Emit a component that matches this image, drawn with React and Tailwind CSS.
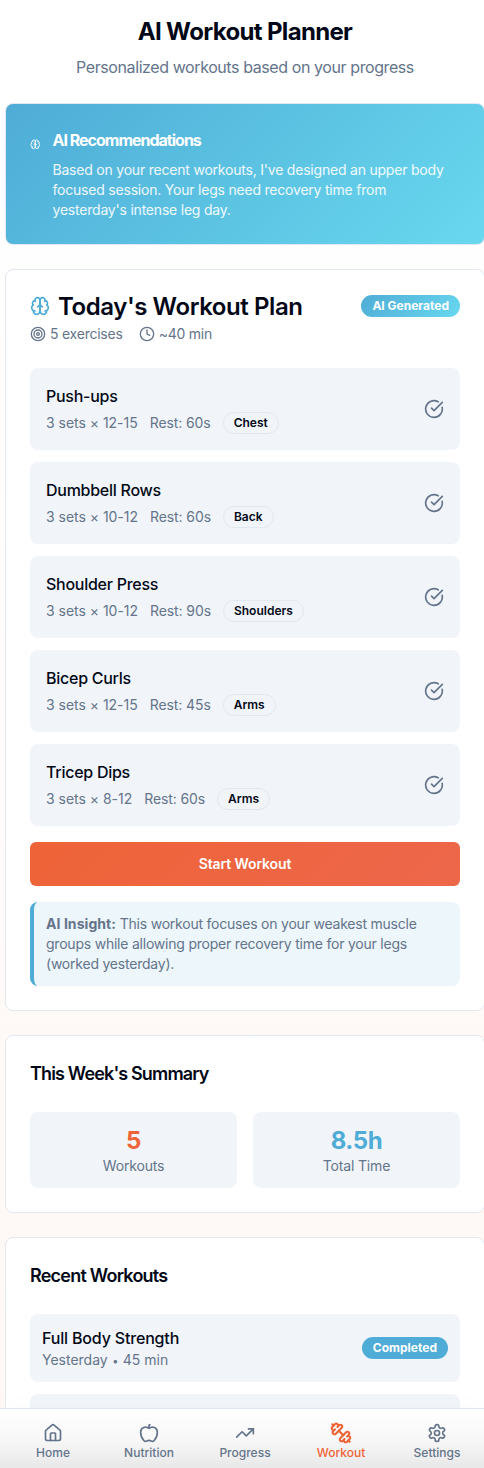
import { CircleCheckBig, Target, Clock, TrendingUp, Apple } from "lucide-react";

const INK = "text-[#020817]";
const MUTED = "text-[#64748b]";

const exercises = [
  { name: "Push-ups", sets: "3 sets × 12-15", rest: "Rest: 60s", group: "Chest" },
  { name: "Dumbbell Rows", sets: "3 sets × 10-12", rest: "Rest: 60s", group: "Back" },
  { name: "Shoulder Press", sets: "3 sets × 10-12", rest: "Rest: 90s", group: "Shoulders" },
  { name: "Bicep Curls", sets: "3 sets × 12-15", rest: "Rest: 45s", group: "Arms" },
  { name: "Tricep Dips", sets: "3 sets × 8-12", rest: "Rest: 60s", group: "Arms" },
];

function Icon({ paths, className, strokeWidth = 2 }) {
  return (
    <svg viewBox="0 0 24 24" fill="none" stroke="currentColor" strokeWidth={strokeWidth} strokeLinecap="round" strokeLinejoin="round" className={className}>
      {paths.map((d) => <path key={d} d={d} />)}
    </svg>
  );
}

const brainPaths = [
  "M12 5a3 3 0 1 0-5.997.125 4 4 0 0 0-2.526 5.77 4 4 0 0 0 .556 6.588A4 4 0 1 0 12 18Z",
  "M12 5a3 3 0 1 1 5.997.125 4 4 0 0 1 2.526 5.77 4 4 0 0 1-.556 6.588A4 4 0 1 1 12 18Z",
  "M15 13a4.5 4.5 0 0 1-3-4 4.5 4.5 0 0 1-3 4",
  "M17.599 6.5a3 3 0 0 0 .399-1.375",
  "M6.003 5.125A3 3 0 0 0 6.401 6.5",
  "M3.477 10.896a4 4 0 0 1 .585-.396",
  "M19.938 10.5a4 4 0 0 1 .585.396",
  "M6 18a4 4 0 0 1-1.967-.516",
  "M19.967 17.484A4 4 0 0 1 18 18",
];

const homePaths = [
  "M15 21v-8a1 1 0 0 0-1-1h-4a1 1 0 0 0-1 1v8",
  "M3 10a2 2 0 0 1 .709-1.528l7-5.999a2 2 0 0 1 2.582 0l7 5.999A2 2 0 0 1 21 10v9a2 2 0 0 1-2 2H5a2 2 0 0 1-2-2z",
];

const dumbbellPaths = [
  "M14.4 14.4 9.6 9.6",
  "M18.657 21.485a2 2 0 1 1-2.829-2.828l-1.767 1.768a2 2 0 1 1-2.829-2.829l6.364-6.364a2 2 0 1 1 2.829 2.829l-1.768 1.767a2 2 0 1 1 2.828 2.829z",
  "m21.5 21.5-1.4-1.4",
  "M3.9 3.9 2.5 2.5",
  "M6.404 12.768a2 2 0 1 1-2.829-2.829l1.768-1.767a2 2 0 1 1-2.828-2.829l2.828-2.828a2 2 0 1 1 2.829 2.828l1.767-1.768a2 2 0 1 1 2.829 2.829z",
];

const settingsPaths = [
  "M12.22 2h-.44a2 2 0 0 0-2 2v.18a2 2 0 0 1-1 1.73l-.43.25a2 2 0 0 1-2 0l-.15-.08a2 2 0 0 0-2.73.73l-.22.38a2 2 0 0 0 .73 2.73l.15.1a2 2 0 0 1 1 1.72v.51a2 2 0 0 1-1 1.74l-.15.09a2 2 0 0 0-.73 2.73l.22.38a2 2 0 0 0 2.73.73l.15-.08a2 2 0 0 1 2 0l.43.25a2 2 0 0 1 1 1.73V20a2 2 0 0 0 2 2h.44a2 2 0 0 0 2-2v-.18a2 2 0 0 1 1-1.73l.43-.25a2 2 0 0 1 2 0l.15.08a2 2 0 0 0 2.73-.73l.22-.39a2 2 0 0 0-.73-2.73l-.15-.08a2 2 0 0 1-1-1.74v-.5a2 2 0 0 1 1-1.74l.15-.09a2 2 0 0 0 .73-2.73l-.22-.38a2 2 0 0 0-2.73-.73l-.15.08a2 2 0 0 1-2 0l-.43-.25a2 2 0 0 1-1-1.73V4a2 2 0 0 0-2-2z",
  "M15 12a3 3 0 1 1-6 0 3 3 0 0 1 6 0z",
];

function Card({ className = "", children }) {
  return <section className={`w-[480px] shrink-0 rounded-lg border border-[#e2e8f0] p-6 ${className}`}>{children}</section>;
}

function Stat({ value, label, color }) {
  return (
    <div className="rounded-lg bg-[#f1f5f9] px-3 pt-[13px] pb-3 text-center">
      <div className={`text-2xl leading-[31px] font-bold tracking-[-0.4px] ${color}`}>{value}</div>
      <div className={`text-sm tracking-[-0.17px] ${MUTED}`}>{label}</div>
    </div>
  );
}

function NavItem({ icon, label, active }) {
  return (
    <a className={`flex w-24 shrink-0 flex-col items-center gap-0.5 text-xs font-medium ${active ? "text-[#ee6337]" : MUTED}`}>
      {icon}
      <span>{label}</span>
    </a>
  );
}

export default function App() {
  return (
    <div className={`relative h-[1468px] w-full overflow-hidden bg-linear-to-b from-white from-10% via-[#fef9f7] via-75% to-[#fef7f5] font-['Inter',sans-serif] ${INK}`}>
      <main className="flex w-[490px] flex-col items-center gap-6 pt-4">
        <header className="text-center">
          <h1 className="text-2xl leading-8 font-bold tracking-[-0.66px]">AI Workout Planner</h1>
          <p className={`mt-[7px] mb-px text-base leading-6 tracking-[-0.41px] ${MUTED}`}>Personalized workouts based on your progress</p>
        </header>

        <Card className="-mt-px bg-linear-[135deg,#4facd6,#68d8ef] text-white">
          <div className="flex gap-3">
            <Icon paths={brainPaths} className="mt-[11px] h-[10.5px] w-[10.5px] shrink-0" />
            <div>
              <h2 className="mb-2.5 pt-0.5 text-base leading-5 font-bold tracking-[-1px]">AI Recommendations</h2>
              <p className="text-sm leading-5 tracking-[-0.21px] text-white/90">
                Based on your recent workouts, I've designed an upper body focused session. Your legs need recovery time from yesterday's intense leg day.
              </p>
            </div>
          </div>
        </Card>

        <Card className="bg-white">
          <div className="flex h-6 items-center justify-between">
            <h2 className="flex items-center gap-2 text-2xl leading-6 font-semibold tracking-[-0.42px]">
              <Icon paths={brainPaths} className="h-5 w-5 text-[#4facd6]" />
              <span className="pt-px">Today's Workout Plan</span>
            </h2>
            <span className="rounded-full bg-linear-[135deg,#4facd6,#68d8ef] px-[11px] py-[3px] text-xs font-bold text-white">AI Generated</span>
          </div>
          <div className={`mt-1.5 flex h-5 gap-4 text-sm tracking-[-0.23px] ${MUTED}`}>
            <span className="flex items-center gap-1"><Target size={16} />5 exercises</span>
            <span className="flex items-center gap-1"><Clock size={16} />~40 min</span>
          </div>
          <div className="mt-6 flex flex-col gap-3">
            {exercises.map((e) => (
              <div key={e.name} className="flex h-[82px] items-center justify-between rounded-lg bg-[#f1f5f9] px-4">
                <div>
                  <h3 className="text-base font-medium tracking-[-0.26px]">{e.name}</h3>
                  <div className={`mt-1 flex items-center gap-3 text-sm ${MUTED}`}>
                    <span className="tracking-[-0.02px]">{e.sets}</span>
                    <span className="tracking-[-0.1px]">{e.rest}</span>
                    <span className={`rounded-full border border-[#e2e8f0] px-2.5 py-0.5 text-xs font-semibold ${INK}`}>{e.group}</span>
                  </div>
                </div>
                <CircleCheckBig size={20} className={MUTED} />
              </div>
            ))}
          </div>
          <button className="mt-4 h-11 w-full rounded-md bg-linear-[135deg,#ee6337,#ed674b] text-sm font-semibold tracking-[-0.1px] text-white">Start Workout</button>
          <p className={`mt-4 rounded-lg border-l-4 border-[#4facd6] bg-[#edf6fb] p-3 text-sm tracking-[-0.22px] ${MUTED}`}>
            <strong className="font-bold tracking-[0.06px]">AI Insight:</strong> This workout focuses on your weakest muscle groups while allowing proper recovery time for your legs (worked yesterday).
          </p>
        </Card>

        <Card className="bg-white">
          <h2 className="text-lg font-semibold tracking-[-0.85px]">This Week's Summary</h2>
          <div className="mt-6 grid grid-cols-2 gap-4">
            <Stat value="5" label="Workouts" color="text-[#ee6337]" />
            <Stat value="8.5h" label="Total Time" color="text-[#4facd6]" />
          </div>
        </Card>

        <Card className="bg-white">
          <h2 className="text-lg font-semibold tracking-[-0.77px]">Recent Workouts</h2>
          <div className="mt-6 flex flex-col gap-3">
            <div className="flex h-[68px] items-center justify-between rounded-lg bg-[#f1f5f9] px-3">
              <div>
                <h3 className="text-base font-medium tracking-[-0.17px]">Full Body Strength</h3>
                <p className={`text-sm ${MUTED}`}>Yesterday <span className="mx-[0.5px] text-[11px]">•</span> 45 min</p>
              </div>
              <span className="rounded-full bg-[#4facd6] px-[11px] py-[3px] text-xs font-bold text-white">Completed</span>
            </div>
            <div className="h-[68px] rounded-lg bg-[#f1f5f9]" />
          </div>
        </Card>
      </main>

      <nav className="absolute inset-x-0 bottom-0 flex h-[60px] border-t border-[#dfe5ed] bg-linear-to-b from-white via-[#f8f8f8] via-50% to-[#e8e8e8] pt-[14px] pl-[5px] shadow-[0_-4px_20px_rgba(0,0,0,0.015)]">
        <NavItem label="Home" icon={<Icon paths={homePaths} className="h-5 w-5" />} />
        <NavItem label="Nutrition" icon={<Apple size={20} />} />
        <NavItem label="Progress" icon={<TrendingUp size={20} />} />
        <NavItem label="Workout" active icon={<Icon paths={dumbbellPaths} strokeWidth={2.3} className="h-5 w-5 scale-110" />} />
        <NavItem label="Settings" icon={<Icon paths={settingsPaths} className="h-5 w-5" />} />
      </nav>
    </div>
  );
}
